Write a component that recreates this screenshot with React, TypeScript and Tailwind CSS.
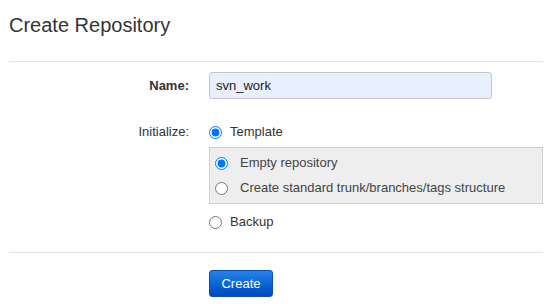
import { useState } from 'react';

export default function App() {
  const [name, setName] = useState('svn_work');
  const [init, setInit] = useState('template');
  const [tpl, setTpl] = useState('empty');

  return (
    <div className="min-h-[304px] bg-white pl-[9px] pr-[15px] text-[13px] text-[#333] font-['Liberation_Sans',Arial,sans-serif]">
      <h1 className="pt-[11px] text-[20px] leading-[28px] font-normal text-[#333]">Create Repository</h1>
      <div className="mt-[22px] h-px bg-[#e5e5e5]" />

      <div className="mt-[10px] flex items-center">
        <label className="w-[180px] text-right font-bold">Name:</label>
        <input
          value={name}
          onChange={e => setName(e.target.value)}
          className="ml-[20px] w-[283px] h-[27px] px-[6px] rounded-[3px] border border-[#c6c6c6] bg-[#e8f0fe] text-[13px] text-[#222] outline-none"
        />
      </div>

      <div className="mt-[23px] flex">
        <div className="w-[180px] text-right leading-[20px]">Initialize:</div>
        <div className="ml-[20px] flex-1">
          <label className="flex items-center h-[20px] gap-[8px]">
            <input
              type="radio"
              checked={init === 'template'}
              onChange={() => setInit('template')}
              className="m-0 w-[13px] h-[13px]"
            />
            <span>Template</span>
          </label>

          <div className="mt-[5px] border border-[#cfcfcf] bg-[#eeeeee] px-[5px] py-[5px] flex flex-col gap-[5px] text-[#444]">
            <label className="flex items-center h-[20px] gap-[12px]">
              <input
                type="radio"
                checked={tpl === 'empty'}
                onChange={() => setTpl('empty')}
                className="m-0 w-[13px] h-[13px]"
              />
              <span>Empty repository</span>
            </label>
            <label className="flex items-center h-[20px] gap-[12px]">
              <input
                type="radio"
                checked={tpl === 'standard'}
                onChange={() => setTpl('standard')}
                className="m-0 w-[13px] h-[13px]"
              />
              <span>Create standard trunk/branches/tags structure</span>
            </label>
          </div>

          <label className="mt-[8px] flex items-center h-[20px] gap-[8px]">
            <input
              type="radio"
              checked={init === 'backup'}
              onChange={() => setInit('backup')}
              className="m-0 w-[13px] h-[13px]"
            />
            <span>Backup</span>
          </label>
        </div>
      </div>

      <div className="mt-[20px] h-px bg-[#e5e5e5]" />

      <div className="mt-[17px] pl-[200px]">
        <button className="w-[64px] h-[27px] rounded-[3px] border border-[#0a4fb0] bg-gradient-to-b from-[#2383e6] to-[#0048c4] text-white text-[13px]">
          Create
        </button>
      </div>
    </div>
  );
}
